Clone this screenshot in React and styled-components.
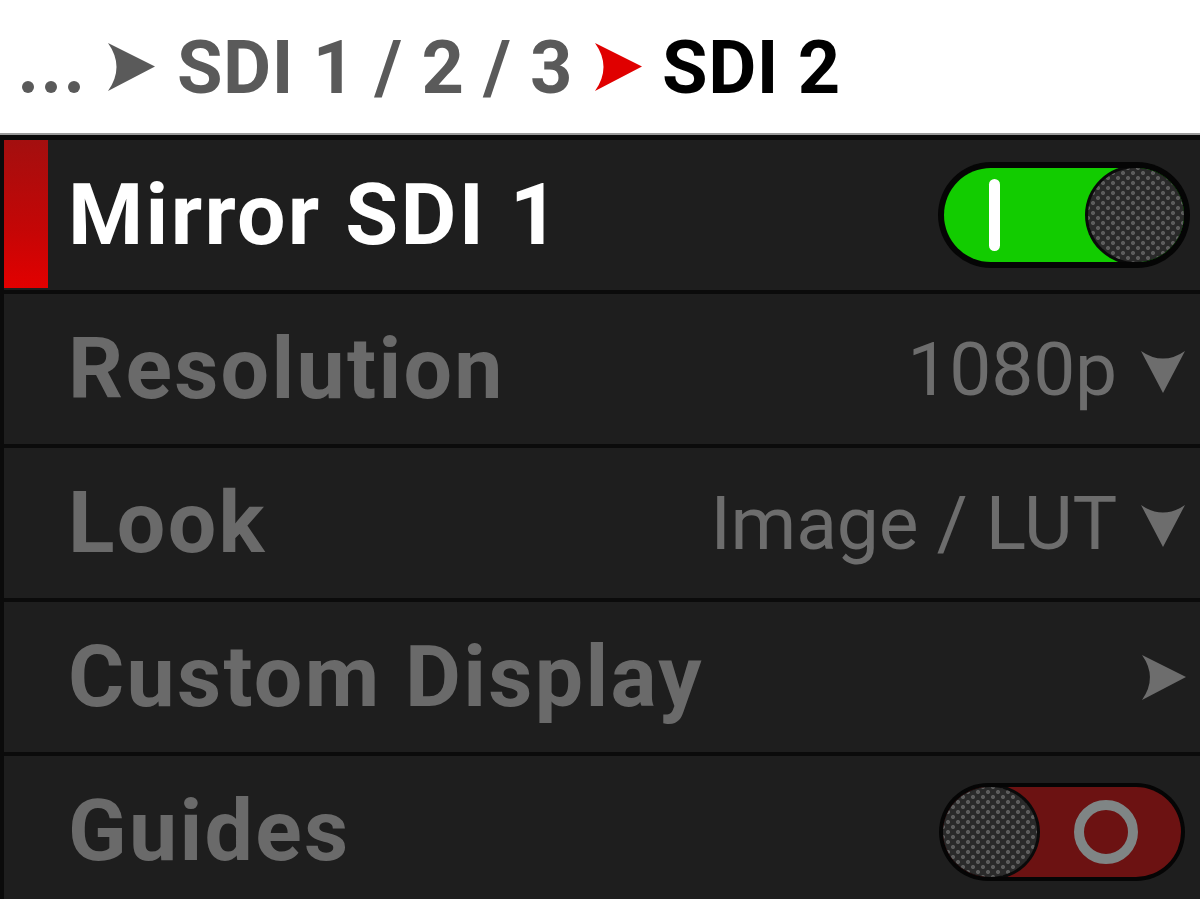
import React from "react";
import styled, { createGlobalStyle } from "styled-components";

const Global = createGlobalStyle`
  html, body { margin: 0; padding: 0; background: #1e1e1e; }
  body { font-family: Roboto, "Noto Sans", sans-serif; overflow: hidden; }
  * { box-sizing: border-box; }
`;

const Screen = styled.div`
  width: 1200px;
  height: 899px;
  display: flex;
  flex-direction: column;
  overflow: hidden;
  background: #0b0b0b;
`;

const Header = styled.header`
  height: 135px;
  flex: none;
  background: #ffffff;
  border-bottom: 2px solid #9a9a9a;
  display: flex;
  align-items: center;
  padding-left: 22px;
  font-weight: 700;
  font-size: 74px;
  letter-spacing: 0.5px;
`;

const Crumb = styled.span`
  color: ${(p) => (p.$current ? "#000000" : "#5a5a5a")};
  line-height: 1;
  margin-top: 2px;
`;

const Dots = styled.span`
  display: flex;
  gap: 11px;
  align-items: flex-end;
  height: 54px;
  padding-bottom: 1px;
  margin-right: 28px;
  & > i {
    width: 12px;
    height: 12px;
    border-radius: 50%;
    background: #5a5a5a;
  }
`;

const ArrowSvg = styled.svg`
  flex: none;
  margin: ${(p) => p.$margin || "0"};
`;

const Panel = styled.div`
  flex: 1;
  display: flex;
  flex-direction: column;
  gap: 4px;
  padding: 5px 0 0 4px;
`;

const Row = styled.div`
  position: relative;
  height: 150px;
  flex: none;
  background: #1e1e1e;
  display: flex;
  align-items: center;
  padding: 0 14px 0 64px;
  &::before {
    content: "";
    display: ${(p) => (p.$selected ? "block" : "none")};
    position: absolute;
    left: 0;
    top: 0;
    bottom: 2px;
    width: 44px;
    background: linear-gradient(180deg, #a30f0f 0%, #c40606 60%, #e20000 100%);
  }
`;

const Label = styled.span`
  flex: 1;
  font-weight: 700;
  font-size: 86px;
  letter-spacing: 2.3px;
  line-height: 1;
  color: ${(p) => (p.$active ? "#ffffff" : "#6a6a6a")};
`;

const Value = styled.span`
  display: flex;
  align-items: center;
  gap: 24px;
  font-weight: 400;
  font-size: 75px;
  line-height: 1;
  color: #6d6d6d;
  letter-spacing: -0.2px;
`;

const Toggle = styled.div`
  width: ${(p) => (p.$on ? "252px" : "246px")};
  height: ${(p) => (p.$on ? "106px" : "98px")};
  border-radius: 53px;
  background: #050505;
  padding: ${(p) => (p.$on ? "6px" : "4px")};
  display: flex;
  margin-right: ${(p) => (p.$on ? "-4px" : "1px")};
  margin-top: ${(p) => (p.$on ? "0" : "2px")};
`;

const Track = styled.div`
  position: relative;
  flex: 1;
  border-radius: 47px;
  background: ${(p) => (p.$on ? "#12cc00" : "#6c1212")};
  overflow: hidden;
  display: flex;
  flex-direction: ${(p) => (p.$on ? "row-reverse" : "row")};
  align-items: center;
`;

const Knob = styled.div`
  width: ${(p) => (p.$on ? "96px" : "94px")};
  height: ${(p) => (p.$on ? "94px" : "90px")};
  flex: none;
  border-radius: 50%;
  background-color: #2a2a2a;
  background-image:
    radial-gradient(circle, #5d5d5d 1.6px, transparent 2.4px),
    radial-gradient(circle, #5d5d5d 1.6px, transparent 2.4px);
  background-size: 10px 10px;
  background-position: 0 0, 5px 5px;
  box-shadow: 0 0 0 3px #0a0a0a;
`;

const Mark = styled.div`
  flex: 1;
  display: flex;
  align-items: center;
  justify-content: center;
  padding-right: ${(p) => (p.$on ? "44px" : "0")};
`;

const OnBar = styled.div`
  width: 11px;
  height: 72px;
  border-radius: 6px;
  background: #ffffff;
`;

const OffRing = styled.div`
  width: 64px;
  height: 64px;
  border-radius: 50%;
  border: 10px solid #7f8585;
  margin-left: -6px;
`;

const Arrow = ({ color, w = 47, h = 48, margin }) => (
  <ArrowSvg width={w} height={h} viewBox="0 0 47 48" $margin={margin}>
    <path d="M0 0 L47 23.5 L0 48 Q17 24 0 0 Z" fill={color} />
  </ArrowSvg>
);

const DownArrow = () => (
  <ArrowSvg width="44" height="44" viewBox="0 0 46 44" $margin="6px 1px 0 0">
    <path d="M0 0 Q23 16 46 0 L23 44 Z" fill="#6d6d6d" />
  </ArrowSvg>
);

const Switch = ({ on }) => (
  <Toggle $on={on}>
    <Track $on={on}>
      <Knob $on={on} />
      <Mark $on={on}>{on ? <OnBar /> : <OffRing />}</Mark>
    </Track>
  </Toggle>
);

export default function App() {
  return (
    <>
      <Global />
      <Screen>
        <Header>
          <Dots>
            <i />
            <i />
            <i />
          </Dots>
          <Arrow color="#5a5a5a" margin="0 22px 0 0" />
          <Crumb>SDI 1 / 2 / 3</Crumb>
          <Arrow color="#e00000" margin="0 20px 0 22px" />
          <Crumb $current>SDI 2</Crumb>
        </Header>
        <Panel>
          <Row $selected>
            <Label $active>Mirror SDI 1</Label>
            <Switch on />
          </Row>
          <Row>
            <Label>Resolution</Label>
            <Value>
              1080p
              <DownArrow />
            </Value>
          </Row>
          <Row>
            <Label>Look</Label>
            <Value>
              Image / LUT
              <DownArrow />
            </Value>
          </Row>
          <Row>
            <Label>Custom Display</Label>
            <Arrow color="#6d6d6d" w={44} h={47} />
          </Row>
          <Row>
            <Label>Guides</Label>
            <Switch on={false} />
          </Row>
        </Panel>
      </Screen>
    </>
  );
}
